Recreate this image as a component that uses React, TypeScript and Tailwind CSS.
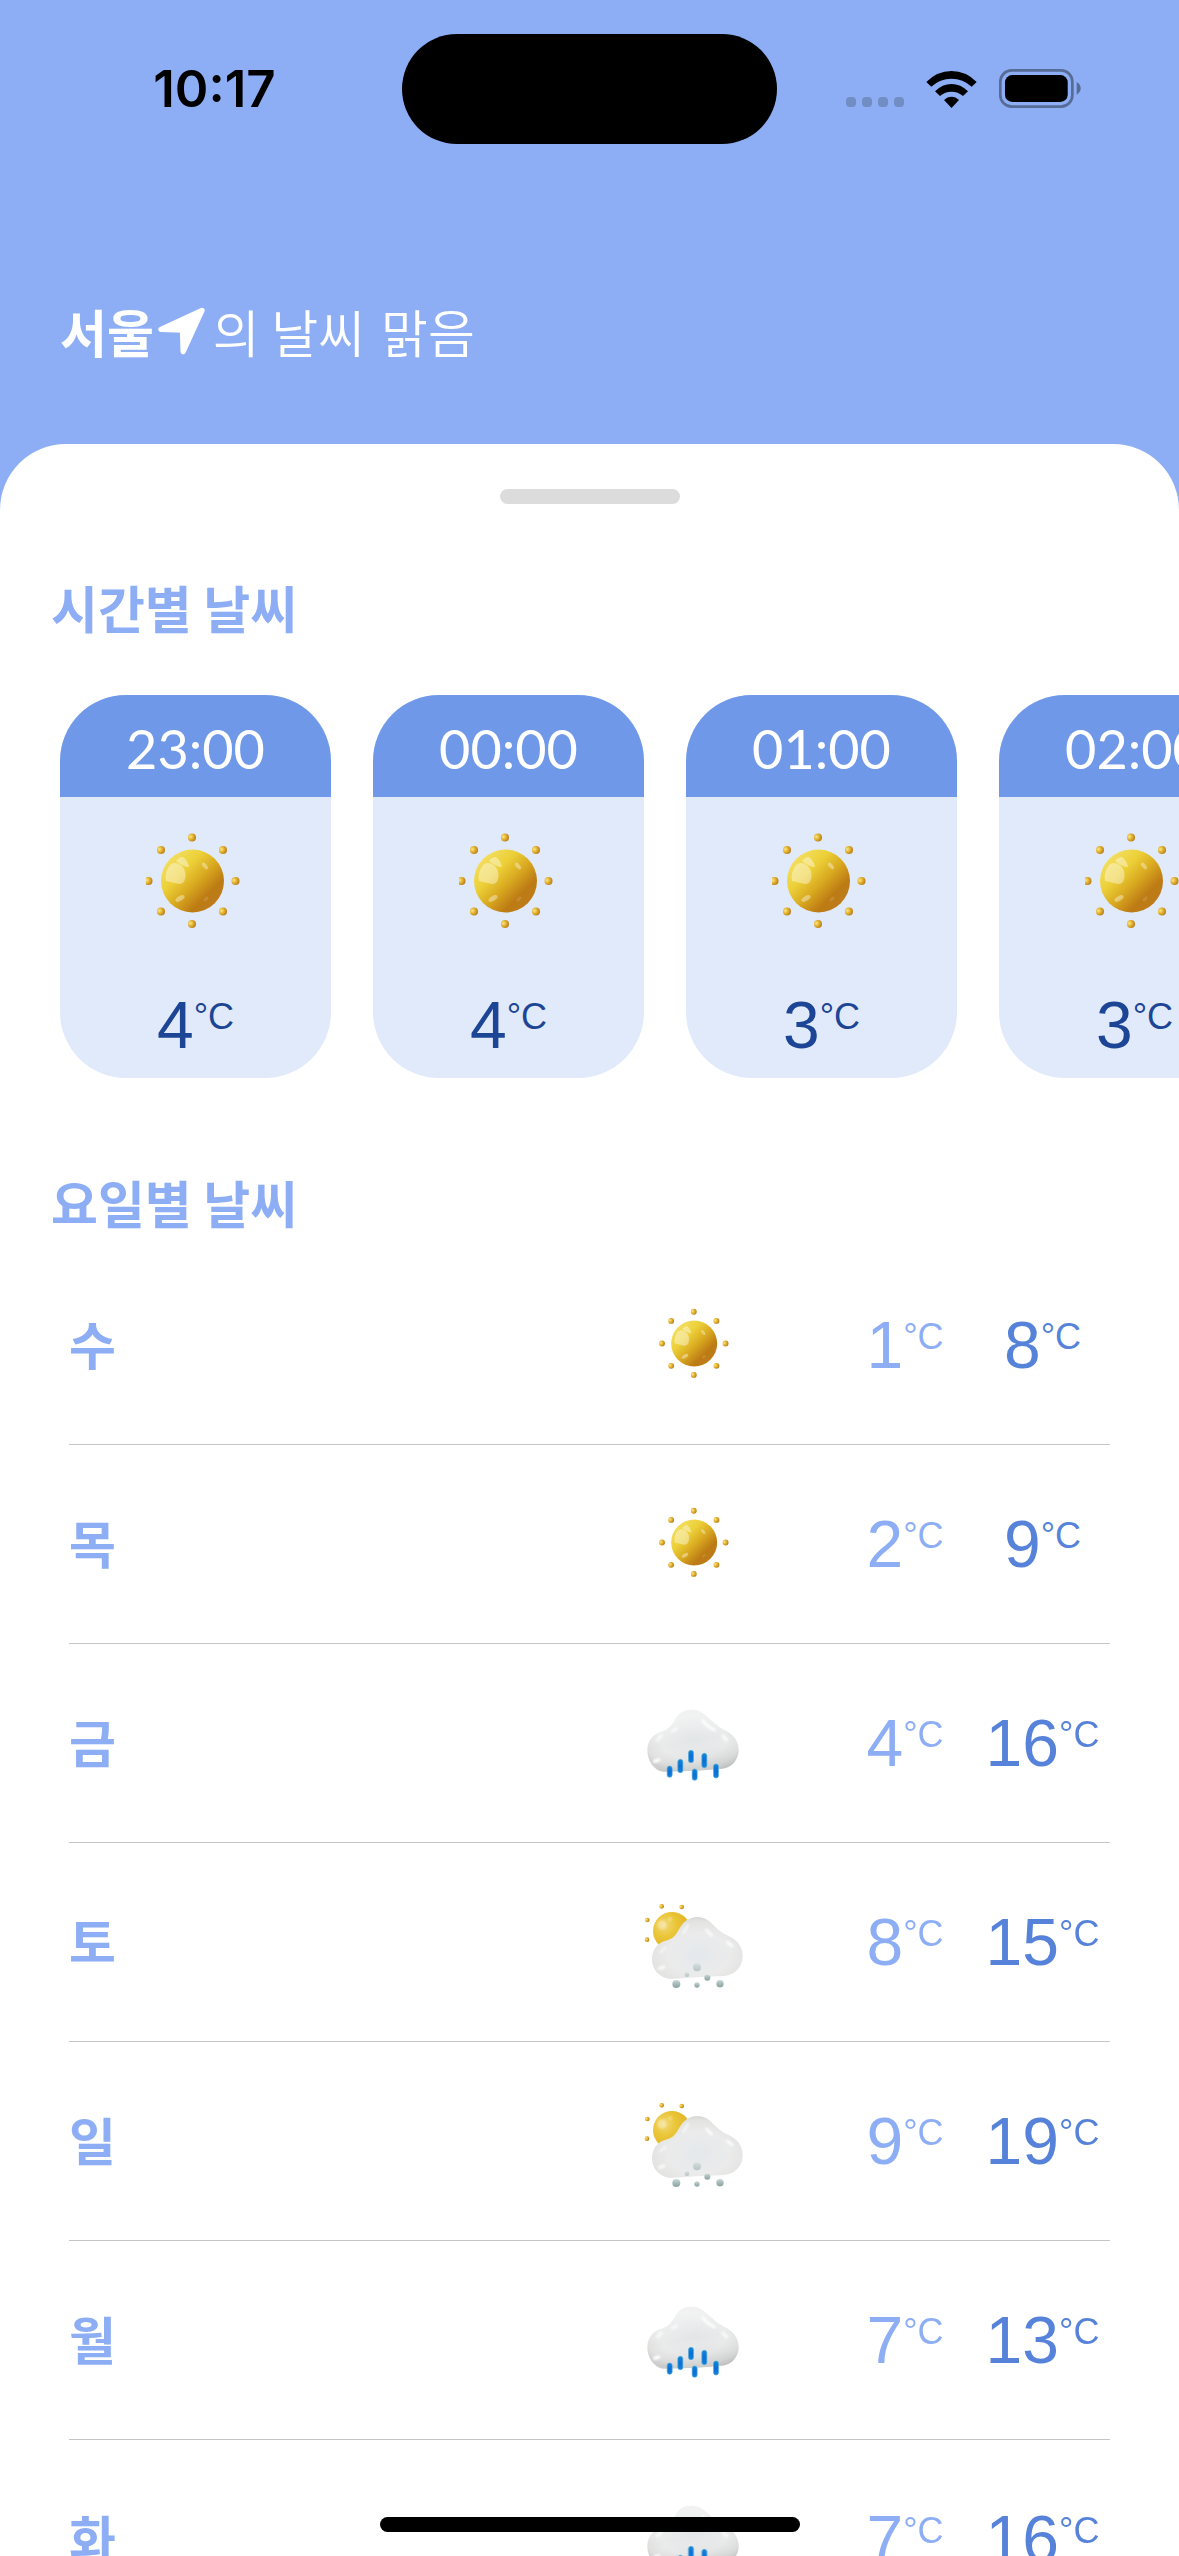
import type { ReactNode } from "react";

type Sky = "sun" | "rain" | "cloud";

const hours = [
  { time: "23:00", temp: 4 },
  { time: "00:00", temp: 4 },
  { time: "01:00", temp: 3 },
  { time: "02:00", temp: 3 },
];

const days: { day: string; sky: Sky; low: number; high: number }[] = [
  { day: "수", sky: "sun", low: 1, high: 8 },
  { day: "목", sky: "sun", low: 2, high: 9 },
  { day: "금", sky: "rain", low: 4, high: 16 },
  { day: "토", sky: "cloud", low: 8, high: 15 },
  { day: "일", sky: "cloud", low: 9, high: 19 },
  { day: "월", sky: "rain", low: 7, high: 13 },
  { day: "화", sky: "rain", low: 7, high: 16 },
];

/* Gradients and filters shared by every weather drawing */
function WeatherDefs() {
  return (
    <svg width="0" height="0" className="absolute" aria-hidden="true">
      <defs>
        <linearGradient id="ball" x1="0.12" y1="0.12" x2="0.88" y2="0.88">
          <stop offset="0" stopColor="#f3df62" />
          <stop offset="0.3" stopColor="#ecd038" />
          <stop offset="0.55" stopColor="#d9a920" />
          <stop offset="0.8" stopColor="#bd7b14" />
          <stop offset="1" stopColor="#bd7c1c" />
        </linearGradient>
        <radialGradient id="bead" cx="0.3" cy="0.4" r="0.7">
          <stop offset="0" stopColor="#fbe78a" />
          <stop offset="0.5" stopColor="#e2b12c" />
          <stop offset="1" stopColor="#b87d1c" />
        </radialGradient>
        <radialGradient id="halfSun" cx="0.3" cy="0.35" r="0.75">
          <stop offset="0" stopColor="#f3d878" />
          <stop offset="0.4" stopColor="#eac638" />
          <stop offset="1" stopColor="#dfae1e" />
        </radialGradient>
        <radialGradient id="rainBody" cx="0.5" cy="0.45" r="0.6">
          <stop offset="0" stopColor="#e2e5e7" />
          <stop offset="0.6" stopColor="#e9eaea" />
          <stop offset="0.88" stopColor="#e0e0df" />
          <stop offset="1" stopColor="#cfcfcf" />
        </radialGradient>
        <linearGradient id="rainShade" x1="0.4" y1="0" x2="0.65" y2="1">
          <stop offset="0" stopColor="#ffffff" stopOpacity="0.5" />
          <stop offset="0.5" stopColor="#ffffff" stopOpacity="0" />
          <stop offset="1" stopColor="#a7a9ab" stopOpacity="0.45" />
        </linearGradient>
        <radialGradient id="cloudBody" cx="0.52" cy="0.6" r="0.62">
          <stop offset="0" stopColor="#e4e8ec" />
          <stop offset="0.55" stopColor="#ebebeb" />
          <stop offset="0.85" stopColor="#e3e3e2" />
          <stop offset="1" stopColor="#d3d3d2" />
        </radialGradient>
        <linearGradient id="drop" x1="0" y1="0" x2="0" y2="1">
          <stop offset="0" stopColor="#1287d8" />
          <stop offset="0.5" stopColor="#0a6fd6" />
          <stop offset="1" stopColor="#1180dc" />
        </linearGradient>
        <linearGradient id="hail" x1="0" y1="0" x2="0" y2="1">
          <stop offset="0" stopColor="#c3d6d5" />
          <stop offset="0.5" stopColor="#9db3b2" />
          <stop offset="1" stopColor="#7e9897" />
        </linearGradient>
        <filter id="soft1"><feGaussianBlur stdDeviation="0.7" /></filter>
        <filter id="soft3"><feGaussianBlur stdDeviation="3" /></filter>
      </defs>
    </svg>
  );
}

function SunShape() {
  const beads = [
    [0, -43.5], [31, -31], [43.5, 0], [31, 30.5],
    [0, 43], [-31, 30.5], [-43.5, 0], [-31, -31],
  ];
  return (
    <g>
      {beads.map(([x, y]) => (
        <circle key={`${x},${y}`} cx={x} cy={y} r="4" fill="url(#bead)" />
      ))}
      <circle cx="0.5" cy="0" r="31.5" fill="url(#ball)" />
      <g fill="#fff" filter="url(#soft1)">
        <path d="M-21-17Q-15-20-10-15Q-5-9-7-2Q-8 3-13 3L-26 0Q-28-9-21-17Z" opacity="0.4" />
        <path d="M-16-20Q-13-24-9-24Q-4-20-3-14Q-9-14-16-20Z" opacity="0.4" />
        <ellipse cx="13" cy="-15" rx="4" ry="2" transform="rotate(50 13 -15)" opacity="0.35" />
        <ellipse cx="-12" cy="17.5" rx="5" ry="2.4" transform="rotate(-30 -12 17.5)" opacity="0.38" />
        <ellipse cx="14" cy="18" rx="3" ry="1.6" transform="rotate(-40 14 18)" opacity="0.12" />
      </g>
    </g>
  );
}

function SkyIcon({ sky }: { sky: Sky }) {
  if (sky === "sun") {
    return (
      <svg viewBox="-101 -87 219 178" className="h-[130px] w-[160px] shrink-0" role="img" aria-label="맑음">
        <SunShape />
      </svg>
    );
  }
  if (sky === "rain") {
    const body =
      "M130 275C103 272 82 244 82 210C83 181 98 162 130 153C158 143 160 120 178 102C198 84 232 86 251 102C272 118 285 135 312 149C342 163 356 184 356 211C355 240 336 263 306 266L230 272Z";
    const drops = [
      [149, 258, 292], [181, 238, 278], [213, 211, 248],
      [224, 267, 301], [253, 220, 263], [288, 252, 294],
    ];
    return (
      <svg viewBox="0 -6 480 390" className="h-[130px] w-[160px] shrink-0" role="img" aria-label="비">
        <path d={body} fill="url(#rainBody)" />
        <path d={body} fill="url(#rainShade)" />
        <g stroke="#fff" strokeLinecap="round" fill="none" filter="url(#soft3)">
          <path d="M248 122Q262 140 284 150" strokeWidth="8" />
          <path d="M308 168L320 180" strokeWidth="9" opacity="0.8" />
          <path d="M104 244L116 240" strokeWidth="10" />
          <path d="M112 180L124 168" strokeWidth="9" opacity="0.7" />
          <path d="M158 154L170 146" strokeWidth="9" opacity="0.7" />
        </g>
        {drops.map(([x, top, bottom]) => (
          <rect key={x} x={x - 7.5} y={top} width="15" height={bottom - top} rx="7.5" fill="url(#drop)" stroke="#55a9d8" strokeWidth="2" />
        ))}
      </svg>
    );
  }
  const body =
    "M150 297C118 293 97 268 96 240C96 208 112 188 142 181C170 173 172 150 190 129C212 106 246 106 266 122C286 139 298 155 324 167C354 180 369 202 368 231C366 262 346 284 312 288L230 292Z";
  const beads = [[125, 79], [185, 81], [82, 120], [81, 179]];
  const hail = [[231, 262, 12], [201, 284, 7], [262, 293, 9], [169, 312, 12], [231, 315, 8], [300, 311, 11]];
  return (
    <svg viewBox="0 -9 480 390" className="h-[130px] w-[160px] shrink-0" role="img" aria-label="구름 조금">
      {beads.map(([x, y]) => (
        <circle key={y} cx={x} cy={y} r="7" fill="url(#bead)" />
      ))}
      <circle cx="156" cy="153" r="57" fill="url(#halfSun)" />
      <g fill="#fff" opacity="0.35" filter="url(#soft3)">
        <circle cx="126" cy="135" r="14" />
        <circle cx="150" cy="118" r="6" />
      </g>
      <path d={body} fill="url(#cloudBody)" />
      <g stroke="#fff" strokeLinecap="round" fill="none" filter="url(#soft3)">
        <path d="M260 150L274 166" strokeWidth="9" opacity="0.8" />
        <path d="M322 186L336 198" strokeWidth="9" opacity="0.8" />
        <path d="M118 266L132 260" strokeWidth="9" opacity="0.8" />
        <path d="M122 216L136 204" strokeWidth="8" opacity="0.6" />
        <path d="M190 158L204 136" strokeWidth="8" opacity="0.6" />
      </g>
      {hail.map(([x, y, r]) => (
        <circle key={`${x},${y}`} cx={x} cy={y} r={r} fill="url(#hail)" opacity={y < 290 ? 0.45 : 0.9} />
      ))}
    </svg>
  );
}

function Temp({ value, className }: { value: number; className: string }) {
  return (
    <span className={`text-center font-['Liberation_Sans',sans-serif] text-[66px] leading-[70px] ${className}`}>
      {value}
      <sup className="top-0 align-[19px] text-[36px] leading-none">°C</sup>
    </span>
  );
}

function SectionTitle({ children }: { children: ReactNode }) {
  return <h2 className="px-[51px] text-[51px] leading-[60px] font-bold text-[#8daef5]">{children}</h2>;
}

function StatusBar() {
  return (
    <div className="grid grid-cols-[1fr_375px_1fr] items-center pt-[34px] text-black">
      <time className="pl-[27px] text-center font-['Inter',sans-serif] text-[51px] leading-[60px] font-semibold">10:17</time>
      <div className="h-[110px] rounded-full bg-black" />
      <div className="flex items-center pl-[69px]">
        <div className="flex gap-[6px] pt-[26px]">
          {[0, 1, 2, 3].map((i) => (
            <span key={i} className="size-[10px] rounded-[4px] bg-[#728dc4]" />
          ))}
        </div>
        <svg viewBox="0 0 151 111" className="ml-[22px] h-[37px] w-[51px]" aria-label="Wi-Fi">
          <path d="M0 33Q32 0 75.500 0T151 33L136 47Q110 23 75.500 23T15 47Z" />
          <path d="M26 61Q48 39 75.500 39T125 61L110 75Q95 62 75.500 62T41 75Z" />
          <path d="M53 87Q63 77 75.500 77T98 87L75.500 111Z" />
        </svg>
        <svg viewBox="0 0 247 117" className="mb-[2px] ml-[22px] h-[39px] w-[82px]" aria-label="Battery">
          <rect x="4" y="4" width="217" height="109" rx="34" fill="none" stroke="#566b96" strokeWidth="8" />
          <rect x="18" y="18" width="189" height="81" rx="22" />
          <path d="M234 39Q246 46 246 58T234 77Z" fill="#566b96" />
        </svg>
      </div>
    </div>
  );
}

export default function App() {
  return (
    <div className="relative flex h-screen flex-col overflow-hidden bg-[#8daef5] font-['Noto_Sans_CJK_KR',sans-serif]">
      <WeatherDefs />
      <header>
        <StatusBar />
        <h1 className="mt-[157px] mb-[83px] flex items-center px-[60px] text-[51px] leading-[60px] font-[350] text-white">
          <strong className="font-bold">서울</strong>
          <svg viewBox="0 0 142 144" className="mr-[8px] ml-[4px] h-[48px] w-[47px]" fill="#fff" stroke="#fff" strokeWidth="16" strokeLinejoin="round" aria-hidden="true">
            <path d="M133 10L9 67L74 69L76 134Z" />
          </svg>
          <span>의 날씨</span>
          <span className="ml-4">맑음</span>
        </h1>
      </header>

      <main className="min-h-0 flex-1 overflow-y-auto rounded-t-[66px] bg-white [scrollbar-width:none]">
        <div className="mx-auto mt-[45px] h-[15px] w-[180px] rounded-full bg-[#dcdcdc]" />

        <section className="mt-[73px]">
          <SectionTitle>시간별 날씨</SectionTitle>
          <ul className="mt-[58px] flex gap-[42px] overflow-x-auto px-[60px] [scrollbar-width:none]">
            {hours.map(({ time, temp }) => (
              <li key={time} className="flex h-[383px] w-[271px] shrink-0 flex-col items-center overflow-hidden rounded-[66px] bg-[#e1eafa]">
                <div className="w-full bg-[#6f99e8] pt-[6px] text-center font-['Lato',sans-serif] text-[54px] leading-[96px] text-white">
                  {time}
                </div>
                <svg viewBox="-46 -50 100 100" className="mt-[34px] size-[100px]" role="img" aria-label="맑음">
                  <SunShape />
                </svg>
                <Temp value={temp} className="mt-[59px] text-[#1c4595]" />
              </li>
            ))}
          </ul>
        </section>

        <section className="mt-[94px]">
          <SectionTitle>요일별 날씨</SectionTitle>
          <ul className="mt-[14px] px-[69px]">
            {days.map(({ day, sky, low, high }) => (
              <li key={day} className="flex h-[199px] items-center border-b border-[#c6c6c6]">
                <span className="flex-1 pb-1 text-[51px] leading-[60px] font-bold text-[#8daef5]">{day}</span>
                <SkyIcon sky={sky} />
                <Temp value={low} className="ml-[55px] w-[140px] text-[#8daef5]" />
                <Temp value={high} className="w-[135px] text-[#5683d9]" />
              </li>
            ))}
          </ul>
        </section>
      </main>

      <div className="absolute bottom-6 left-1/2 h-[15px] w-[420px] -translate-x-1/2 rounded-full bg-black" />
    </div>
  );
}
